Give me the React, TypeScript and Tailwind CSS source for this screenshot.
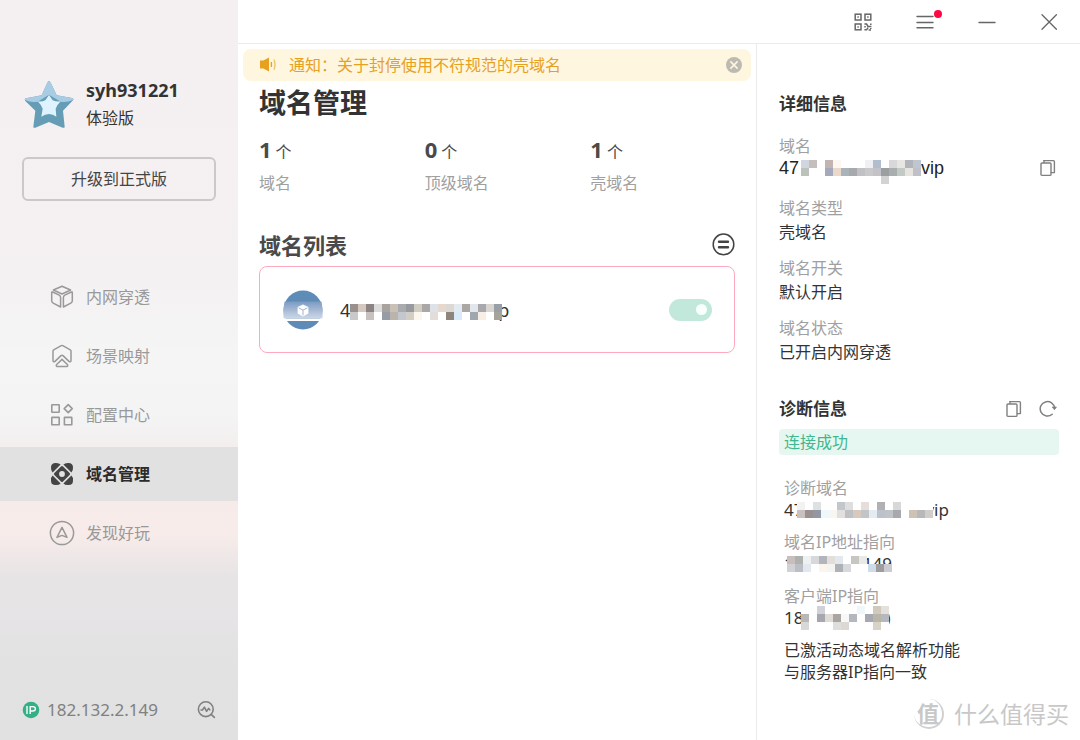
import React, { useState } from "react";

const _ = "";

type MosaicProps = { rows: string[][]; className?: string };

/* Pixelated strip that hides part of a private value. */
function Mosaic({ rows, className }: MosaicProps) {
  const w = rows[0].length * 8;
  const h = rows.length * 8;
  return (
    <svg width={w} height={h} viewBox={`0 0 ${w} ${h}`} shapeRendering="crispEdges" className={`relative shrink-0 ${className ?? ""}`} aria-hidden="true">
      {rows.map((row, y) =>
        row.map((c, x) => (c ? <rect key={`${x}-${y}`} x={x * 8} y={y * 8} width="8" height="8" fill={c} /> : null)),
      )}
    </svg>
  );
}

const listMosaic = [
  ["#9a918e", "#d6c8bf", "#8b8384", "#dcdcdc", "#a8a39f", "#c9c0b8", "#a9abae", "#979a9f", "#d0cdc2", "#aba7a6", "#dde2e8", "#e6d8cc", "#dcd9d5", "#e5e9f0", "#aba7a4", "#e3e6ea", "#a8a9af", "#dbd5d2", "#989fa6"],
  ["#c9c9c9", _, "#c9c0c0", _, "#969ba5", "#bab4ad", "#c3c8d0", "#d3cdc5", "#fcf6ee", _, "#e2ddd8", _, "#8d857b", "#d9eafa", _, "#9fa8ae", "#f8eee6", _, "#a6a39a"],
];
const domainMosaic = [
  ["#d0d5e0", "#c4bebc", "#ffffff", "#c2b5b1", "#fdf7f4", "#ffffff", "#ffffff", "#ffffff", "#f0f0f2", "#b0becd", "#ffffff", "#d8d8da", "#e8e6e2", "#b2b4bc", "#bfc6d0"],
  ["#bcc2bb", "#ffffff", "#ffffff", "#a5a9bc", "#ead9c8", "#aab2ba", "#a8a9ac", "#bfc1c5", "#c9c9cb", "#c3c3c7", "#9b9f9f", "#a9adad", "#c3c9c4", "#e7e3e0", "#bfc0c8"],
  [_, _, _, _, _, _, _, _, _, _, "#d2d3d5", _, _, _, _],
];
const diagMosaic = [
  ["#f2f2f2", "#ffffff", "#dde1e1", "#ffffff", "#ffffff", "#c2c7cc", "#dededf", "#ffffff", "#e6dedb", "#ffffff", "#b1b1b3", "#ffffff", "#d8d8d9", "#ffffff", "#ffffff", "#ffffff", "#ffffff"],
  ["#c9c1bf", "#9a908f", "#9297a3", "#edf8fd", "#f8f5f2", "#e3dfdd", "#bfc0c3", "#d7c9bd", "#c2c5c8", "#e5ebf3", "#bcc1ca", "#c1c4c7", "#a7a9ad", "#ffffff", "#cec2b5", "#b7b8b9", "#d1cdc8"],
];
const ipMosaic = [
  ["#c8bfbd", "#aeb2af", "#eff0f1", "#d6d8dc", "#b3b5bc", "#e2dfd9", "#e3e8ee", "#ffffff", "#c8c6c3", "#e9e9e7", _, _, _],
  ["#d1d2d5", "#bbbec4", "#e3e8ef", "#ffffff", "#faf6ee", "#f4f4f2", "#aeb2b4", "#d7d9dc", "#ffffff", "#ffffff", "#d0dbe8", "#9d9da0", "#cbcbd0"],
];
const clientMosaic = [
  ["#ffffff", "#ffffff", "#d1d1da", "#ffffff", "#ffffff", "#ffffff", "#ffffff", "#eff7fc", "#ffffff", "#cfc9be", "#e4e1dc"],
  ["#b9b8b7", "#ffffff", "#a7a8af", "#dfdcd5", "#aaa5a2", "#f8f8f8", "#b3b7be", "#ffffff", "#a7a9b2", "#b9b5a9", "#b5b8bf"],
  ["#d8d8d7", "#ffffff", "#ffffff", "#ffffff", "#dededd", "#dcd9d4", "#ffffff", "#ffffff", "#ffffff", "#d9d2c7", "#ffffff"],
];

const StarLogo = () => (
  <svg width="50" height="49" viewBox="70 58 150 147" aria-hidden="true">
    <path d="M145 61Q148 61 150 66L168 104L214 112Q221 114 217 119L187 150L192 198Q192 203 186 201L145 184L104 201Q98 203 98 198L104 150L74 121Q70 115 76 113L123 104L140 66Q142 61 145 61Z" fill="#659db6" />
    <path d="M145 61Q148 61 150 66L168 104L214 112Q219 113 218 117Q197 127 180 123L145 102L111 123Q92 127 73 118Q70 114 76 113L123 104L140 66Q142 61 145 61Z" fill="#a8cce3" />
    <path d="M145 103L156 119Q168 124 180 122Q168 134 165 144L167 168Q157 160 145 160Q133 160 122 168L126 144Q123 134 111 122Q124 124 134 119Z" fill="#dff3fe" />
  </svg>
);

const line = { fill: "none", stroke: "currentColor", strokeLinejoin: "round" as const, strokeLinecap: "round" as const };

const CubeIcon = () => (
  <svg width="24" height="24" viewBox="0 0 24 24" strokeWidth="1.5" {...line} aria-hidden="true">
    <path d="M12 1.2L20.6 5L12 9L3.4 5Z" />
    <path d="M1.7 7.6Q1.7 6.6 2.7 7L9.2 10.2Q10.6 11 10.6 12.4V22L3.2 18.2Q1.7 17.4 1.7 15.8Z" />
    <path d="M22.3 7.6Q22.3 6.6 21.3 7L14.8 10.2Q13.4 11 13.4 12.4V22L20.8 18.2Q22.3 17.4 22.3 15.8Z" />
  </svg>
);
const SceneIcon = () => (
  <svg width="24" height="24" viewBox="0 0 24 24" strokeWidth="1.5" {...line} aria-hidden="true">
    <path d="M3 16.6V7Q3 6.3 3.7 5.9L11.2 1.7Q12 1.3 12.8 1.7L20.3 5.9Q21 6.3 21 7V16.6Q20.6 18.6 19 17.4L13 11.6Q12 10.8 11 11.6L5 17.4Q3.4 18.6 3 16.6Z" />
    <path d="M12 15.4L17.6 20.8Q18 22.4 17 22.4H7Q6 22.4 6.4 20.8Z" />
  </svg>
);
const GridIcon = () => (
  <svg width="24" height="24" viewBox="0 0 24 24" strokeWidth="1.6" {...line} aria-hidden="true">
    <rect x="1.8" y="1.8" width="7.4" height="7.4" rx=".4" />
    <rect x="1.8" y="14.4" width="7.4" height="7.4" rx=".4" />
    <rect x="14.4" y="14.4" width="7.4" height="7.4" rx=".4" />
    <path d="M18.2 1.6L22.2 5.6L18.2 9.6L14.2 5.6Z" />
  </svg>
);
const DomainIcon = () => (
  <svg width="24" height="24" viewBox="0 0 24 24" fill="#444" aria-hidden="true">
    <path d="M10.6 2.6L2.6 10.6Q.8 9 1 5.6Q1 1 5.6 1Q9 .8 10.6 2.6Z" />
    <path d="M13.4 2.6L21.4 10.6Q23.2 9 23 5.6Q23 1 18.4 1Q15 .8 13.4 2.6Z" />
    <path d="M10.6 21.4L2.6 13.4Q.8 15 1 18.4Q1 23 5.6 23Q9 23.2 10.6 21.4Z" />
    <path d="M13.4 21.4L21.4 13.4Q23.2 15 23 18.4Q23 23 18.4 23Q15 23.2 13.4 21.4Z" />
    <path d="M11 4.4Q12 3.4 13 4.4L19.6 11Q20.6 12 19.6 13L13 19.6Q12 20.6 11 19.6L4.4 13Q3.4 12 4.4 11Z" />
    <circle cx="12" cy="12" r="2.9" fill="#e1e1e1" />
  </svg>
);
const DiscoverIcon = () => (
  <svg width="26" height="26" viewBox="0 0 26 26" strokeWidth="1.5" {...line} aria-hidden="true" className="-mx-px">
    <circle cx="13" cy="13" r="11.6" />
    <path d="M13 7.4L18 17.4L13 15.4L8 17.4Z" />
  </svg>
);

const CopyIcon = () => (
  <svg width="18" height="18" viewBox="0 0 18 18" strokeWidth="1.4" {...line} aria-hidden="true">
    <rect x="2" y="4" width="10" height="12.4" rx="1" />
    <path d="M4.6 1.6H14.4Q15.4 1.6 15.4 2.6V13.6H12.4M5 1.6V3.6" />
  </svg>
);
const RefreshIcon = () => (
  <svg width="18" height="18" viewBox="0 0 18 18" strokeWidth="1.5" {...line} aria-hidden="true">
    <path d="M13.2 14.2A7.2 7.2 0 1 1 15.6 8.4" />
    <path d="M13.6 7H17.4L15.6 9.4Z" fill="currentColor" strokeWidth=".8" />
  </svg>
);

const QrIcon = () => (
  <svg width="18" height="18" viewBox="0 0 18 18" fill="none" stroke="#666" strokeWidth="1.5" aria-hidden="true">
    <rect x="1.2" y="1.2" width="5.8" height="5.8" />
    <rect x="11" y="1.2" width="5.8" height="5.8" />
    <rect x="1.2" y="11" width="5.8" height="5.8" />
    <path d="M3.4 4.1H4.8M13.2 4.1H14.6M3.4 13.9H4.8" />
    <path d="M10.4 11H12.6L14 13.4H17.4M16.8 10.4V12M11 13V14.4M10.4 16.8H12.6L14 14.6M14.6 17H17M16.8 15V16" />
  </svg>
);

const nav = [
  { label: "内网穿透", icon: <CubeIcon /> },
  { label: "场景映射", icon: <SceneIcon /> },
  { label: "配置中心", icon: <GridIcon /> },
  { label: "域名管理", icon: <DomainIcon /> },
  { label: "发现好玩", icon: <DiscoverIcon /> },
];

function Sidebar() {
  return (
    <aside className="flex w-[238px] shrink-0 flex-col bg-[linear-gradient(180deg,#f4f0f1_0%,#f4f1f2_38%,#f5f5f6_48%,#f4f4f5_56%,#f3efef_60%,#f6ebe9_68%,#f7ecea_72%,#e7e4e5_78%,#e6e4e6_83%,#e2e2e2_91%,#e1e1e1_100%)]">
      <div className="flex items-center gap-3 px-6 pt-[76px]">
        <StarLogo />
        <div className="text-[#333]">
          <div className="text-[18px] leading-7 font-bold">syh931221</div>
          <div className="text-base leading-7">体验版</div>
        </div>
      </div>
      <div className="px-[22px] pt-[25px]">
        <button type="button" className="h-11 w-full rounded-md border-2 border-[#cbc8c9] text-base text-[#444]">
          升级到正式版
        </button>
      </div>
      <nav className="flex flex-col gap-[5px] pt-[69px]">
        {nav.map((n) => (
          <a
            key={n.label}
            href="#"
            className={
              n.label === "域名管理"
                ? "flex h-[54px] items-center gap-3 bg-[#e1e1e1] pl-[50px] text-base font-bold text-[#2b2b2b]"
                : "flex h-[54px] items-center gap-3 pl-[50px] text-base text-[#999]"
            }
          >
            {n.icon}
            <span>{n.label}</span>
          </a>
        ))}
      </nav>
      <div className="mt-auto flex items-center px-[22px] pb-4 text-[#808080]">
        <svg width="18" height="18" viewBox="0 0 18 18" aria-hidden="true">
          <circle cx="9" cy="9" r="8.3" fill="#35b086" />
          <path d="M5 5V13M8.2 13V5.6H10.8Q13.4 5.6 13.4 7.8Q13.4 10 10.8 10H8.4" fill="none" stroke="#fff" strokeWidth="1.4" />
        </svg>
        <span className="ml-[7px] text-[17px] leading-7">182.132.2.149</span>
        <button type="button" aria-label="诊断" className="ml-auto">
          <svg width="19" height="19" viewBox="0 0 19 19" strokeWidth="1.6" {...line} aria-hidden="true">
            <circle cx="8.8" cy="8.2" r="7.4" />
            <path d="M14.4 13.6L17.4 16.4M4 9H5.4L7.4 6.2L9.6 10.4L11.6 7.4L12.8 8.8" />
          </svg>
        </button>
      </div>
    </aside>
  );
}

function Header() {
  return (
    <header className="flex h-11 shrink-0 items-center justify-end gap-[44px] border-b border-[#ebebeb] pr-[22px] text-[#666]">
      <button type="button" aria-label="二维码"><QrIcon /></button>
      <button type="button" aria-label="菜单" className="relative">
        <svg width="18" height="18" viewBox="0 0 18 18" strokeWidth="1.4" {...line} aria-hidden="true">
          <path d="M1 3.5H17M1 9.5H17M1 14.8H17" />
        </svg>
        <span className="absolute -top-[3px] -right-2 size-2 rounded-full bg-[#ff0844]" />
      </button>
      <button type="button" aria-label="最小化">
        <svg width="18" height="18" viewBox="0 0 18 18" strokeWidth="1.4" {...line} aria-hidden="true"><path d="M1 9.5H17" /></svg>
      </button>
      <button type="button" aria-label="关闭">
        <svg width="18" height="18" viewBox="0 0 18 18" strokeWidth="1.3" {...line} aria-hidden="true"><path d="M2 1.8L16.4 16.2M16.4 1.8L2 16.2" /></svg>
      </button>
    </header>
  );
}

const stats = [
  { n: "1", label: "域名" },
  { n: "0", label: "顶级域名" },
  { n: "1", label: "壳域名" },
];

function Domains() {
  const [on, setOn] = useState(true);
  return (
    <main className="min-w-0 flex-1 pt-[5px]">
      <div className="mx-[5px] flex h-8 items-center rounded-lg bg-[#fff6e0] pr-2 pl-4 text-base text-[#e6a11f]">
        <svg width="18" height="16" viewBox="0 0 18 16" aria-hidden="true">
          <path d="M1 3.6H4.4L10 .6V14.4L4.4 11.4H1Z" fill="#e6a11f" />
          <path d="M12.4 5V10" stroke="#e6a11f" strokeWidth="1.4" />
          <path d="M15 2.4Q17 7.6 15 12.8" stroke="#e6a11f" strokeWidth="1.4" fill="none" opacity=".6" />
        </svg>
        <span className="ml-3 flex-1">通知：关于封停使用不符规范的壳域名</span>
        <button type="button" aria-label="关闭通知">
          <svg width="18" height="18" viewBox="0 0 18 18" aria-hidden="true">
            <circle cx="9" cy="9" r="8" fill="#bdbab1" />
            <path d="M5.4 5.4L12.6 12.6M12.6 5.4L5.4 12.6" stroke="#fff6e0" strokeWidth="1.5" />
          </svg>
        </button>
      </div>
      <h1 className="pl-[21px] text-[27px] leading-[44px] font-bold text-[#333]">域名管理</h1>
      <div className="grid grid-cols-3 pt-2 pl-[21px]">
        {stats.map((s) => (
          <div key={s.label} className="flex flex-col gap-[2px]">
            <div className="flex items-baseline gap-1 leading-8 text-[#4a4a4a]">
              <span className="text-[22px] font-bold">{s.n}</span>
              <span className="text-base">个</span>
            </div>
            <div className="text-base leading-8 text-[#a0a0a0]">{s.label}</div>
          </div>
        ))}
      </div>
      <div className="flex items-center justify-between px-[21px] pt-7">
        <h2 className="text-[22px] leading-9 font-bold text-[#4a4a4a]">域名列表</h2>
        <button type="button" aria-label="切换列表">
          <svg width="24" height="24" viewBox="0 0 24 24" fill="none" stroke="#444" aria-hidden="true">
            <circle cx="12.5" cy="11.4" r="10.3" strokeWidth="1.5" />
            <path d="M8 8.8H17M8 14.2H17" strokeWidth="2.4" strokeLinecap="round" />
          </svg>
        </button>
      </div>
      <div className="mx-[21px] mt-[3px] flex h-[87px] items-center rounded-lg border border-[#ffa9bf] px-[22px]">
        <svg width="42" height="42" viewBox="0 0 42 42" aria-hidden="true">
          <defs>
            <linearGradient id="band" x1="0" y1="0" x2="0" y2="1">
              <stop offset="0" stopColor="#7b9bc3" />
              <stop offset="1" stopColor="#cfd8e6" />
            </linearGradient>
          </defs>
          <circle cx="21" cy="21" r="19.4" fill="#5f8bb7" />
          <path d="M2.6 12.6H39.4Q41.6 21 40.4 29.6H1.6Q.4 21 2.6 12.6Z" fill="url(#band)" />
          <rect x="0" y="29.6" width="42" height="2.4" fill="#fff" />
          <path d="M21 15.4L26.4 18V24.4L21 27.4L15.6 24.4V18Z" fill="#fff" />
          <path d="M16.6 18.8L21 21.2L25.4 18.8M21 21.2V26.4" stroke="#9fb3d0" strokeWidth="1" fill="none" />
        </svg>
        <div className="ml-4 flex items-center text-lg text-[#333]">
          <span>4</span>
          <Mosaic rows={listMosaic} className="top-[2px]" />
          <span className="-ml-1">p</span>
        </div>
        <input
          type="checkbox"
          role="switch"
          aria-label="域名开关"
          checked={on}
          onChange={() => setOn(!on)}
          className="ml-auto flex h-[22px] w-[43px] appearance-none items-center rounded-full bg-[#d9d9d9] px-[5px] before:block before:size-[11px] before:rounded-full before:bg-[#f8fffc] checked:justify-end checked:bg-[#c2e8db]"
        />
      </div>
    </main>
  );
}

const details = [
  { k: "域名类型", v: "壳域名" },
  { k: "域名开关", v: "默认开启" },
  { k: "域名状态", v: "已开启内网穿透" },
];

function Details() {
  return (
    <section className="w-[324px] shrink-0 border-l border-[#ebebeb] pr-[21px] pl-[22px] text-base text-[#333]">
      <h2 className="pt-12 text-[17px] leading-6 font-bold">详细信息</h2>
      <dl className="pt-[19px]">
        <div className="pb-[17px] leading-[22px]">
          <dt className="text-[#a0a0a0]">域名</dt>
          <dd className="flex h-[22px] items-center font-['Liberation_Sans',sans-serif] text-[18px] text-[#222]">
            <span>47</span>
            <Mosaic rows={domainMosaic} className="top-1 ml-[2px]" />
            <span>vip</span>
            <button type="button" aria-label="复制域名" className="mr-[2px] ml-auto text-[#808080]"><CopyIcon /></button>
          </dd>
        </div>
        <div className="flex flex-col gap-3 leading-6">
          {details.map((d) => (
            <div key={d.k}>
              <dt className="text-[#a0a0a0]">{d.k}</dt>
              <dd>{d.v}</dd>
            </div>
          ))}
        </div>
      </dl>
      <div className="flex items-center pt-8 text-[#808080]">
        <h2 className="flex-1 text-[17px] leading-[26px] font-bold text-[#333]">诊断信息</h2>
        <button type="button" aria-label="复制诊断信息" className="mr-4"><CopyIcon /></button>
        <button type="button" aria-label="刷新" className="mr-[2px]"><RefreshIcon /></button>
      </div>
      <p className="mt-[7px] rounded bg-[#e6f6f0] pl-[5px] leading-[26px] text-[#41b78f]">连接成功</p>
      <dl className="flex flex-col gap-[10px] pt-[22px] pl-[5px] leading-[22px]">
        <div>
          <dt className="text-[#a0a0a0]">诊断域名</dt>
          <dd className="flex h-[22px] items-center text-[17px]">
            <span>47</span>
            <Mosaic rows={diagMosaic} className="-ml-[6px]" />
            <span className="-ml-2">vip</span>
          </dd>
        </div>
        <div>
          <dt className="text-[#a0a0a0]">域名IP地址指向</dt>
          <dd className="flex h-[22px] items-center text-[17px]">
            <span>1</span>
            <Mosaic rows={ipMosaic} className="-ml-[7px]" />
            <span className="-ml-7">149</span>
            <Mosaic rows={[ipMosaic[1].slice(9)]} className="top-1 -ml-8" />
          </dd>
        </div>
        <div>
          <dt className="text-[#a0a0a0]">客户端IP指向</dt>
          <dd className="flex h-[22px] items-center text-[17px]">
            <span>18</span>
            <Mosaic rows={clientMosaic} className="-ml-[2px]" />
            <span className="-ml-1">)</span>
          </dd>
        </div>
      </dl>
      <p className="pt-[10px] pl-[5px] leading-[22px]">
        已激活动态域名解析功能
        <br />
        与服务器IP指向一致
      </p>
    </section>
  );
}

export default function App() {
  return (
    <div className="relative flex min-h-screen bg-white font-['Noto_Sans','Noto_Sans_CJK_SC',sans-serif]">
      <Sidebar />
      <div className="flex min-w-0 flex-1 flex-col">
        <Header />
        <div className="flex flex-1">
          <Domains />
          <Details />
        </div>
      </div>
      <div className="absolute right-[11px] bottom-2 flex items-center gap-[10px] text-[#c8c8c8]">
        <span className="flex size-[30px] items-center justify-center rounded-full border-r-2 border-b-2 border-[#d0d0d0] text-[22px] font-bold">值</span>
        <span className="text-[23px] leading-9">什么值得买</span>
      </div>
    </div>
  );
}
